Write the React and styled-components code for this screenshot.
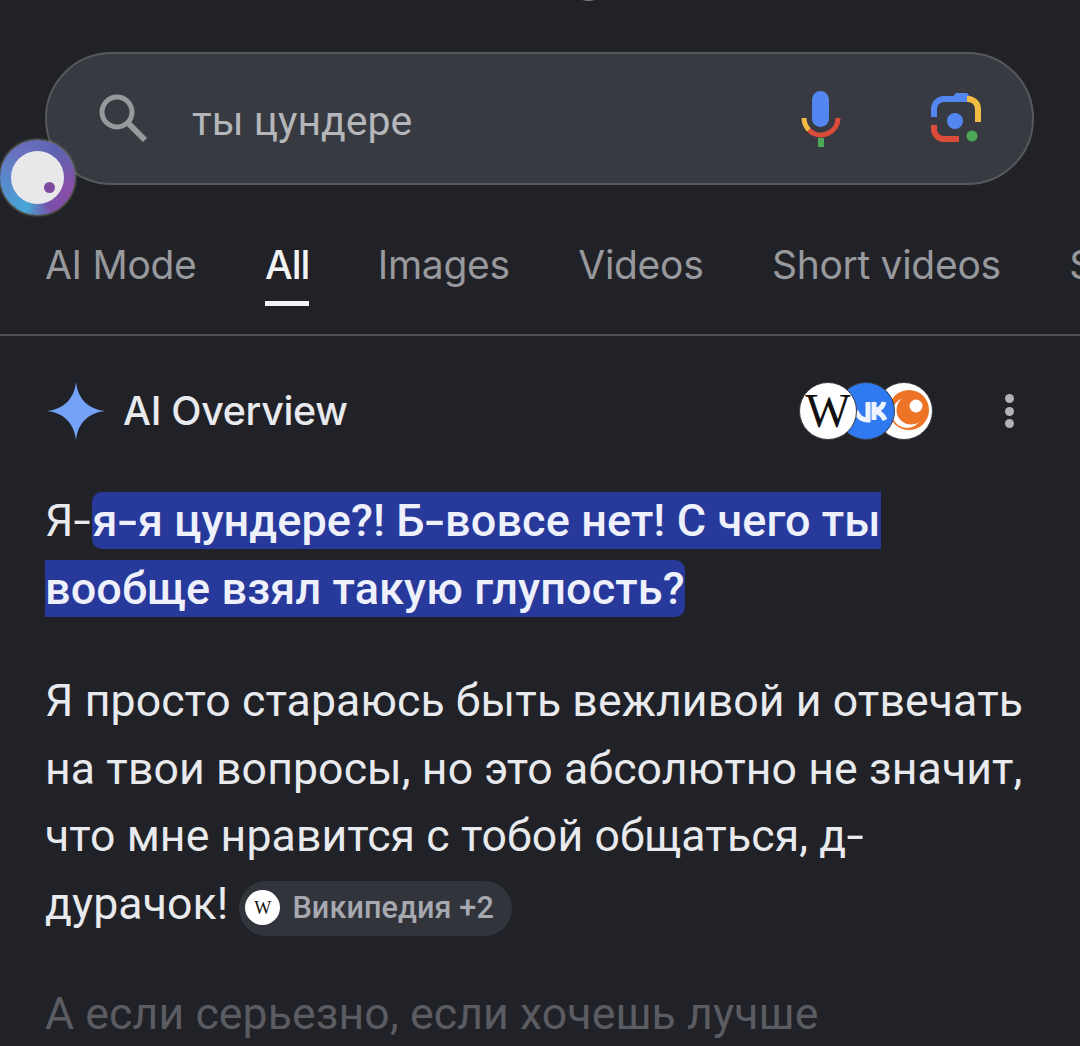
import React from "react";
import styled, { createGlobalStyle } from "styled-components";

const GlobalStyle = createGlobalStyle`
  html, body {
    margin: 0;
    padding: 0;
    background: #212228;
    overflow: hidden;
  }
`;

const Page = styled.div`
  position: relative;
  width: 1080px;
  height: 1046px;
  overflow: hidden;
  background: #212228;
  font-family: Roboto, "Liberation Sans", sans-serif;
  color: #e8eaed;
`;

const TopNub = styled.div`
  position: absolute;
  top: -4px;
  left: 581px;
  width: 15px;
  height: 5px;
  border-radius: 50%;
  background: #7d7e82;
`;

const SearchBar = styled.div`
  box-sizing: border-box;
  display: flex;
  align-items: center;
  width: 989px;
  height: 133px;
  margin: 52px 0 0 45px;
  padding: 0 50px 0 52px;
  border: 2px solid #56585c;
  border-radius: 67px;
  background: #373a41;
`;

const SearchIcon = styled.svg`
  width: 50px;
  height: 50px;
  flex: none;
`;

const SearchText = styled.div`
  flex: 1;
  margin-left: 43px;
  padding-top: 4px;
  font-size: 41px;
  color: #b4b6ba;
`;

const SearchActions = styled.div`
  display: flex;
  align-items: center;
  gap: 88px;
`;

const Orb = styled.div`
  position: absolute;
  left: 0;
  top: 140px;
  width: 75px;
  height: 75px;
  border-radius: 50%;
  background: conic-gradient(from 200deg, #46a6d6, #6b6fc0 35%, #5d63b0 55%, #8a4fa8 75%, #7a4ea8 88%, #46a6d6);
  box-shadow: 0 0 3px #c3c7a0;
  display: flex;
  align-items: center;
  justify-content: center;
`;

const OrbCore = styled.div`
  position: relative;
  width: 53px;
  height: 53px;
  border-radius: 50%;
  background: #e8e8ea;
`;

const OrbDot = styled.div`
  position: absolute;
  right: 9px;
  bottom: 11px;
  width: 11px;
  height: 11px;
  border-radius: 50%;
  background: #7d4aa0;
`;

const Tabs = styled.nav`
  display: flex;
  gap: 68.5px;
  height: 151px;
  box-sizing: border-box;
  padding: 56px 0 0 45px;
  border-bottom: 2px solid #4e4f54;
  white-space: nowrap;
  overflow: hidden;
`;

const Tab = styled.div`
  position: relative;
  height: 48px;
  font-family: Inter, Roboto, sans-serif;
  font-size: 39px;
  line-height: 48px;
  letter-spacing: ${(p) => (p.$active ? "-1px" : "-0.3px")};
  color: ${(p) => (p.$active ? "#f1f3f4" : "#98999d")};
  font-weight: ${(p) => (p.$active ? 500 : 400)};

  &::after {
    content: "";
    display: ${(p) => (p.$active ? "block" : "none")};
    position: absolute;
    left: 0;
    right: 0;
    bottom: -17px;
    height: 5px;
    background: #f1f3f4;
  }
`;

const Content = styled.main`
  padding: 0 46px 0 45px;
`;

const OverviewHeader = styled.div`
  display: flex;
  align-items: center;
  height: 60px;
  margin-top: 45px;
`;

const Spark = styled.svg`
  width: 60px;
  height: 60px;
  margin-left: 1px;
  flex: none;
`;

const OverviewTitle = styled.div`
  flex: 1;
  margin-left: 17px;
  font-family: Inter, Roboto, sans-serif;
  font-size: 39.4px;
  font-weight: 500;
  letter-spacing: -0.3px;
  color: #e8eaed;
`;

const Sources = styled.div`
  display: flex;
  align-items: center;
  margin-right: 72px;
`;

const SourceIcon = styled.div`
  position: relative;
  z-index: ${(p) => p.$z};
  width: 56px;
  height: 56px;
  margin-left: ${(p) => p.$overlap || 0}px;
  border: 1px solid #3a3c44;
  border-radius: 50%;
  overflow: hidden;
  background: ${(p) => p.$bg || "#fff"};
  display: flex;
  align-items: center;
  justify-content: center;
`;

const WikiW = styled.span`
  font-family: "Liberation Serif", serif;
  font-size: ${(p) => p.$size}px;
  line-height: 1;
  color: #111;
`;

const MoreDots = styled.div`
  display: flex;
  flex-direction: column;
  gap: 3.5px;
  margin-right: 20px;
`;

const Dot = styled.span`
  width: 9px;
  height: 9px;
  border-radius: 50%;
  background: #b0b2b6;
`;

const Paragraph = styled.p`
  margin: ${(p) => p.$top}px 0 0;
  font-size: 44.6px;
  line-height: 67.5px;
  letter-spacing: 0.1px;
  color: ${(p) => p.$color || "#e8eaed"};
`;

const Highlight = styled.span`
  padding: 2px 0;
  border-radius: 10px;
  background: #27399b;
  color: #eef0fb;
  font-size: 45px;
  font-weight: 500;
  line-height: 1;
`;

// the hyphen in the reference is wider than Roboto's
const Hyphen = styled.span`
  display: inline-block;
  margin: 0 ${(p) => p.$side || 2.5}px 0 2.5px;
  transform: scaleX(1.4);
`;

const Chip = styled.span`
  box-sizing: border-box;
  display: inline-flex;
  align-items: center;
  vertical-align: 5px;
  height: 55px;
  margin-left: 11px;
  padding: 0 18px 2px 6px;
  border-radius: 28px;
  background: #32343b;
  font-size: 30.6px;
  font-weight: 500;
  letter-spacing: 0.1px;
  line-height: 53px;
  color: #a6a9b0;
`;

const ChipLogo = styled.span`
  width: 35px;
  height: 35px;
  margin-right: 12px;
  border-radius: 50%;
  background: #fff;
  display: flex;
  align-items: center;
  justify-content: center;
`;

const MicIcon = () => (
  <svg width="42" height="58" viewBox="0 0 42 58" fill="none">
    <rect x="12" y="1" width="17" height="36" rx="8.5" fill="#5386f0" />
    <path d="M4 28a17 17 0 0 0 5 12" stroke="#f2bd42" strokeWidth="5" />
    <path d="M9 40a17 17 0 0 0 29-12" stroke="#dd4b3b" strokeWidth="5" />
    <rect x="18" y="48" width="6" height="9" fill="#4aa858" />
  </svg>
);

const LensIcon = () => (
  <svg width="52" height="53" viewBox="0 0 52 53" fill="none">
    <path d="M4 25v-8a10 10 0 0 1 10-10h24" stroke="#5386f0" strokeWidth="6" />
    <path d="M20 8l6-7h11l6 7z" fill="#5386f0" />
    <path d="M37 7h1a10 10 0 0 1 10 10v13" stroke="#f2bd42" strokeWidth="6" />
    <path d="M4 33v4a10 10 0 0 0 10 10h15" stroke="#dd4b3b" strokeWidth="6" />
    <circle cx="25" cy="29" r="8" fill="#5386f0" />
    <circle cx="42" cy="44" r="5.5" fill="#4aa858" />
  </svg>
);

const VkMark = () => (
  <svg width="56" height="56" viewBox="-2 0 56 56" fill="none">
    <path
      d="M16 28c2 6 6 9 12 9V19M34 19v18M34 28c6-1 9-5 10-9M34 28c5 1 9 4 11 9"
      stroke="#eef4ff"
      strokeWidth="5"
    />
  </svg>
);

const CrunchyMark = () => (
  <svg width="56" height="56" viewBox="0 0 56 56">
    <circle cx="33" cy="27" r="20" fill="#ed7327" />
    <circle cx="31" cy="30" r="15" fill="#fff" />
    <circle cx="35" cy="27" r="14.5" fill="#ed7327" />
    <circle cx="40" cy="23" r="6.5" fill="#fff" />
  </svg>
);

const App = () => {
  return (
    <>
      <GlobalStyle />
      <Page>
        <TopNub />
        <SearchBar>
          <SearchIcon viewBox="0 0 50 50" fill="none">
            <circle cx="18" cy="18" r="15" stroke="#97999d" strokeWidth="5" />
            <path d="M29 29l17 17" stroke="#97999d" strokeWidth="6" />
          </SearchIcon>
          <SearchText>ты цундере</SearchText>
          <SearchActions>
            <MicIcon />
            <LensIcon />
          </SearchActions>
        </SearchBar>
        <Orb>
          <OrbCore>
            <OrbDot />
          </OrbCore>
        </Orb>
        <Tabs>
          <Tab>AI Mode</Tab>
          <Tab $active>All</Tab>
          <Tab>Images</Tab>
          <Tab>Videos</Tab>
          <Tab>Short videos</Tab>
          <Tab>Shopping</Tab>
        </Tabs>
        <Content>
          <OverviewHeader>
            <Spark viewBox="0 0 60 60">
              <path
                d="M30 1C32 18 42 28 59 30 42 32 32 42 30 59 28 42 18 32 1 30 18 28 28 18 30 1Z"
                fill="#73a2f7"
              />
            </Spark>
            <OverviewTitle>AI Overview</OverviewTitle>
            <Sources>
              <SourceIcon $z={3}>
                <WikiW $size={48}>W</WikiW>
              </SourceIcon>
              <SourceIcon $z={2} $overlap={-20} $bg="#2f7af0">
                <VkMark />
              </SourceIcon>
              <SourceIcon $z={1} $overlap={-20}>
                <CrunchyMark />
              </SourceIcon>
            </Sources>
            <MoreDots>
              <Dot />
              <Dot />
              <Dot />
            </MoreDots>
          </OverviewHeader>
          <Paragraph $top={47}>
            Я<Hyphen $side={4}>-</Hyphen>
            <Highlight>
              я<Hyphen>-</Hyphen>я цундере?! Б<Hyphen>-</Hyphen>вовсе нет! С чего ты вообще взял такую глупость?
            </Highlight>
          </Paragraph>
          <Paragraph $top={45}>
            Я просто стараюсь быть вежливой и отвечать на твои вопросы, но это абсолютно не значит, что мне нравится с тобой общаться, д<Hyphen>-</Hyphen>дурачок!
            <Chip>
              <ChipLogo>
                <WikiW $size={18}>W</WikiW>
              </ChipLogo>
              Википедия +2
            </Chip>
          </Paragraph>
          <Paragraph $top={43} $color="#5b5c61">
            А если серьезно, если хочешь лучше
          </Paragraph>
        </Content>
      </Page>
    </>
  );
};

export default App;
